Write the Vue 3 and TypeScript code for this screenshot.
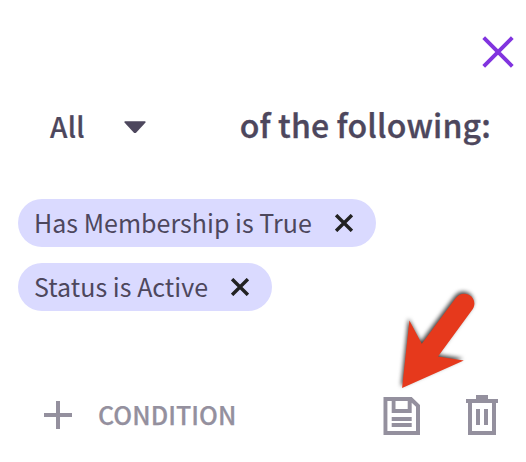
<script setup lang="ts">
import { ref } from 'vue'

interface Condition {
  id: number
  label: string
}

const match = ref('All')
const conditions = ref<Condition[]>([
  { id: 1, label: 'Has Membership is True' },
  { id: 2, label: 'Status is Active' },
])

function remove(id: number): void {
  conditions.value = conditions.value.filter((c) => c.id !== id)
}
</script>

<template>
  <section class="panel">
    <header class="top">
      <button class="btn" type="button">
        <svg class="icon" width="32" height="32" viewBox="0 0 32 32">
          <path d="M1.7 1.7 30.3 30.3M30.3 1.7 1.7 30.3" fill="none" stroke="#8134df" stroke-width="3.9" />
        </svg>
      </button>
    </header>

    <div class="match">
      <div class="select">
        <span class="value">{{ match }}</span>
        <svg class="icon caret" width="22" height="13" viewBox="0 0 22 13">
          <path d="M1.2 .3H20.8Q22.2 .5 21.3 1.8L12.3 11.4Q11 12.7 9.7 11.4L.7 1.8Q-.2 .5 1.2 .3Z" fill="#4d475d" />
        </svg>
      </div>
      <span class="caption">of the following:</span>
    </div>

    <div class="chips">
      <div v-for="c in conditions" :key="c.id" class="chip">
        <span class="label">{{ c.label }}</span>
        <button class="btn" type="button" @click="remove(c.id)">
          <svg class="icon" width="18" height="18" viewBox="0 0 18 18">
            <path d="M1.1 1.1 16.9 16.9M16.9 1.1 1.1 16.9" fill="none" stroke="#222" stroke-width="3.4" />
          </svg>
        </button>
      </div>
    </div>

    <footer class="actions">
      <button class="btn add" type="button">
        <svg class="icon" width="28" height="28" viewBox="0 0 28 28">
          <path d="M12 0h4v12h12v4H16v12h-4V16H0v-4h12Z" fill="#94909e" />
        </svg>
        <span class="add-label">CONDITION</span>
      </button>
      <div class="tools">
        <button class="btn" type="button">
          <svg class="icon" width="37" height="38" viewBox="0 0 37 38">
            <path fill="#94909e" fill-rule="evenodd" d="M.5 0H28.7L37 8V38H.5ZM4.4 4V34H33V9.7L28.7 5.7V16H8.7V4ZM12.5 4V12H24.7V4ZM8.7 20H28.7V24H8.7ZM8.7 26H28.7V30H8.7Z" />
          </svg>
        </button>
        <button class="btn" type="button">
          <svg class="icon" width="32" height="40" viewBox="0 0 32 40">
            <path fill="#94909e" fill-rule="evenodd" d="M10 0H22V4H32V8H30V40H2V8H0V4H10ZM6 8V36H26V8ZM10 14H14V30H10ZM18 14H22V30H18Z" />
          </svg>
        </button>
      </div>
    </footer>

    <svg class="pointer" width="96" height="116" viewBox="390 280 96 116">
      <path d="M402.1 388 409.4 320.5 421.8 343.8 455.2 298.8C458.5 293.8 464 292.3 469.2 295C474.5 297.7 475.8 304.2 472.8 309L438 356.6 463.8 360.6Z" fill="#e6391c" />
    </svg>
  </section>
</template>

<style>
body {
  background: #fff;
}
</style>

<style scoped>
.panel {
  position: relative;
  box-sizing: border-box;
  width: 526px;
  height: 462px;
  overflow: hidden;
  padding: 36px 12px 0 18px;
  color: #4d475d;
  font-family: "Noto Sans CJK JP", "Noto Sans CJK SC", "Noto Sans", sans-serif;
}

.icon {
  display: block;
  flex: none;
}

.btn {
  display: flex;
  align-items: center;
  padding: 0;
  border: 0;
  background: none;
  color: inherit;
  font: inherit;
}

.top {
  display: flex;
  align-items: flex-start;
  justify-content: flex-end;
  height: 69px;
}

.match {
  display: flex;
  align-items: center;
  justify-content: space-between;
  height: 42px;
  padding: 0 23px 0 32px;
  white-space: nowrap;
}

.select {
  display: flex;
  align-items: center;
  gap: 39px;
}

.value {
  font-size: 28px;
  line-height: 42px;
  font-weight: 500;
  letter-spacing: 0.3px;
  -webkit-text-stroke: 0.2px currentColor;
}

.caret {
  margin-top: 3px;
}

.caption {
  padding-bottom: 5px;
  font-size: 32px;
  line-height: 42px;
  font-weight: 500;
  letter-spacing: 0.17px;
  -webkit-text-stroke: 0.35px currentColor;
}

.chips {
  display: flex;
  flex-direction: column;
  align-items: flex-start;
  gap: 16px;
  margin-top: 52px;
}

.chip {
  display: flex;
  align-items: center;
  gap: 23px;
  height: 48px;
  padding: 0 23px 0 16px;
  border-radius: 24px;
  background: #dadaff;
}

.label {
  padding-bottom: 2px;
  font-size: 25px;
  line-height: 46px;
  letter-spacing: 0.03px;
  white-space: nowrap;
}

.actions {
  display: flex;
  align-items: center;
  justify-content: space-between;
  height: 40px;
  margin-top: 84px;
  padding: 0 16px 0 26px;
}

.add {
  gap: 26px;
  color: #94909e;
}

.add-label {
  padding-bottom: 2px;
  font-size: 25px;
  line-height: 38px;
  font-weight: 500;
  letter-spacing: 0.05px;
  -webkit-text-stroke: 0.25px currentColor;
}

.tools {
  display: flex;
  align-items: flex-end;
  gap: 46px;
}

.pointer {
  position: absolute;
  left: 390px;
  top: 280px;
  pointer-events: none;
  filter: drop-shadow(-1px -2px 2px rgba(0, 0, 0, 0.75));
}
</style>
